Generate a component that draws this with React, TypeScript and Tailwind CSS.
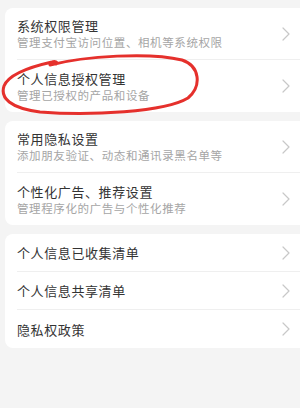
import React from 'react';

interface Item {
  title: string;
  desc?: string;
}

const groups: Item[][] = [
  [
    { title: '系统权限管理', desc: '管理支付宝访问位置、相机等系统权限' },
    { title: '个人信息授权管理', desc: '管理已授权的产品和设备' },
  ],
  [
    { title: '常用隐私设置', desc: '添加朋友验证、动态和通讯录黑名单等' },
    { title: '个性化广告、推荐设置', desc: '管理程序化的广告与个性化推荐' },
  ],
  [
    { title: '个人信息已收集清单' },
    { title: '个人信息共享清单' },
    { title: '隐私权政策' },
  ],
];

const Chevron = () => (
  <svg width="10" height="16" viewBox="0 0 10 16" fill="none" className="shrink-0">
    <path d="M2 2 L8 8 L2 14" stroke="#c8c8c8" strokeWidth="1.2" strokeLinecap="round" strokeLinejoin="round" />
  </svg>
);

const Row = ({ item, last }: { item: Item; last: boolean }) => (
  <div className="flex items-center pl-[12px]">
    <div
      className={`flex flex-1 items-center pr-[19px] ${item.desc ? 'h-[52px]' : 'h-[38px]'} ${
        last ? '' : 'border-b border-[#efefef]'
      }`}
    >
      <div className="flex flex-1 flex-col gap-[1px]">
        <span className="text-[13px] leading-[17px] tracking-[0.6px] text-[#333]">{item.title}</span>
        {item.desc && (
          <span className="text-[11.5px] leading-[15px] tracking-[0.6px] text-[#a5a5a5]">{item.desc}</span>
        )}
      </div>
      <Chevron />
    </div>
  </div>
);

export default function App() {
  return (
    <div
      className="relative h-[408px] w-[300px] overflow-hidden bg-[#f4f4f4] pt-[8px]"
      style={{ fontFamily: '"Noto Sans CJK SC", "Noto Sans", sans-serif' }}
    >
      <div className="flex flex-col gap-[9px]">
        {groups.map((g, gi) => (
          <div key={gi} className="ml-[5px] w-[305px] rounded-[8px] bg-white">
            {g.map((item, i) => (
              <Row key={i} item={item} last={i === g.length - 1} />
            ))}
          </div>
        ))}
      </div>
      <svg className="pointer-events-none absolute left-0 top-0" width="300" height="408" viewBox="0 0 300 408" fill="none">
        <path
          d="M50 65 C 85 56, 150 52, 182 60 C 200 66, 202 86, 188 98 C 165 112, 90 116, 40 112 C 10 108, 0 98, 4 86 C 8 76, 25 68, 52 62 C 55 61, 58 62, 56 64"
          stroke="#e5302c"
          strokeWidth="3"
          strokeLinecap="round"
          strokeLinejoin="round"
        />
      </svg>
    </div>
  );
}
